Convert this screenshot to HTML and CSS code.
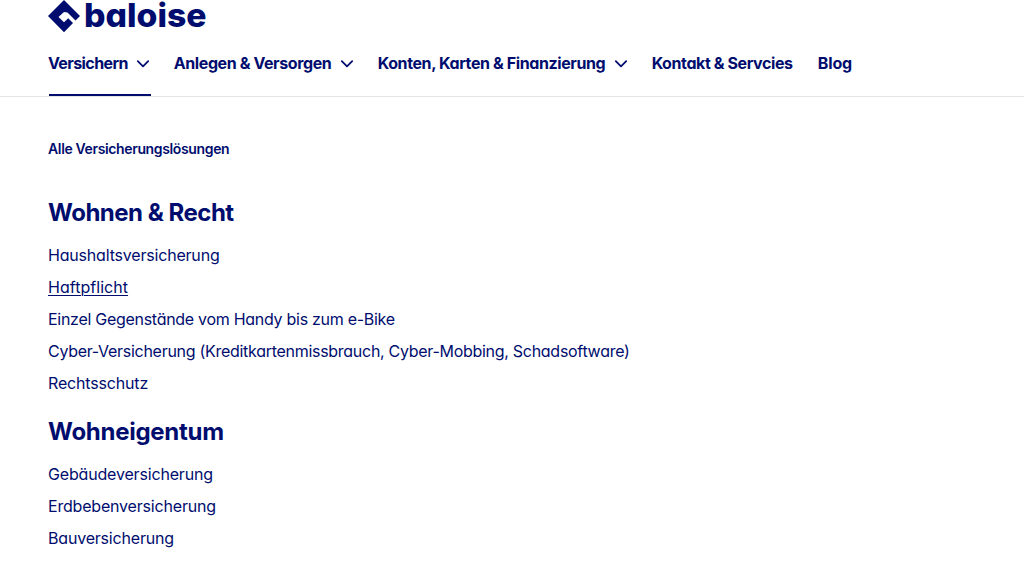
FILE: index.html
```html
<!DOCTYPE html>
<html lang="de">
<head>
<meta charset="utf-8">
<title>Baloise</title>
<link rel="stylesheet" href="styles.css">
</head>
<body>
<header class="header">
  <a class="brand">
    <svg class="logo" width="160" height="36" viewBox="0 0 160 36" role="img" aria-label="baloise">
      <path class="mark" d="M16 0 32 16 27.500 20.500 19.500 12.500 16 12 10.500 17 16 22.300 20.200 18.200 25 23 16 32.300 0 16Z"/>
      <text class="wordmark" x="36" y="27" textLength="122.500" lengthAdjust="spacingAndGlyphs">baloise</text>
    </svg>
  </a>
  <nav class="nav">
    <a class="nav-item active"><span class="t1">Versichern</span><svg class="chevron" viewBox="0 0 14 8"><path d="M1.800 1.200 7 6.300 12.200 1.200"/></svg></a>
    <a class="nav-item"><span class="t2">Anlegen &amp; Versorgen</span><svg class="chevron" viewBox="0 0 14 8"><path d="M1.800 1.200 7 6.300 12.200 1.200"/></svg></a>
    <a class="nav-item"><span class="t3">Konten, Karten &amp; Finanzierung</span><svg class="chevron" viewBox="0 0 14 8"><path d="M1.800 1.200 7 6.300 12.200 1.200"/></svg></a>
    <a class="nav-item"><span class="t4">Kontakt &amp; Servcies</span></a>
    <a class="nav-item last"><span class="t5">Blog</span></a>
  </nav>
</header>
<main class="menu">
  <a class="all">Alle Versicherungslösungen</a>
  <section class="group">
    <h2 class="title recht">Wohnen &amp; Recht</h2>
    <ul class="links">
      <li><a class="l1">Haushaltsversicherung</a></li>
      <li><a class="l2 current">Haftpflicht</a></li>
      <li><a class="l3">Einzel Gegenstände vom Handy bis zum e-Bike</a></li>
      <li><a class="l4">Cyber-Versicherung (Kreditkartenmissbrauch, Cyber-Mobbing, Schadsoftware)</a></li>
      <li><a class="l5">Rechtsschutz</a></li>
    </ul>
  </section>
  <section class="group">
    <h2 class="title eigentum">Wohneigentum</h2>
    <ul class="links">
      <li><a class="l6">Gebäudeversicherung</a></li>
      <li><a class="l7">Erdbebenversicherung</a></li>
      <li><a class="l8">Bauversicherung</a></li>
    </ul>
  </section>
</main>
</body>
</html>
```
FILE: styles.css
```css
* { box-sizing: border-box; }
body { margin: 0; background: #fff; color: #000d6e; font: 400 16px/24px Inter, "Liberation Sans", sans-serif; font-feature-settings: "cv11"; overflow: hidden; }
.header { height: 97px; border-bottom: 1px solid #e5e5e5; padding: 0 48px; }
.brand, .logo { display: block; height: 36px; overflow: visible; }
.mark { fill: #000d6e; }
.wordmark { fill: #000d6e; font-size: 33px; font-weight: 800; }
.nav { display: flex; gap: 24px; height: 60px; }
.nav-item { display: flex; gap: 8.4px; height: 60px; padding-top: 15px; font-weight: 700; white-space: nowrap; letter-spacing: -0.4px; }
.t1 { letter-spacing: -0.6px; }
.last { margin-left: 1.2px; letter-spacing: -0.2px; }
.active { background: linear-gradient(#000d6e, #000d6e) 1px 58px / 102px 2px no-repeat; padding-right: 1px; margin-right: -1.5px; }
.chevron { width: 14px; height: 8px; margin-top: 9px; fill: none; stroke: #000d6e; stroke-width: 1.8; stroke-linecap: round; stroke-linejoin: round; overflow: visible; }
.menu { padding: 40px 48px 0; }
.all { display: block; font-size: 14px; font-weight: 600; height: 24px; letter-spacing: -0.36px; }
.title { margin: 0; font-size: 24px; line-height: 32px; font-weight: 700; }
.recht { letter-spacing: -0.5px; }
.eigentum { letter-spacing: -0.28px; }
.group { margin-top: 36px; }
.group + .group { margin-top: 17px; }
.links { list-style: none; margin: 10px 0 0; padding: 0; }
.links li { height: 32px; padding-top: 4px; white-space: nowrap; }
.l1, .l7, .l8 { letter-spacing: -0.19px; }
.l2 { letter-spacing: 0.04px; }
.l3, .l4 { letter-spacing: -0.285px; }
.l5, .l6 { letter-spacing: -0.17px; }
.current { text-decoration: underline; text-underline-offset: 2px; text-decoration-thickness: 1px; }
```
